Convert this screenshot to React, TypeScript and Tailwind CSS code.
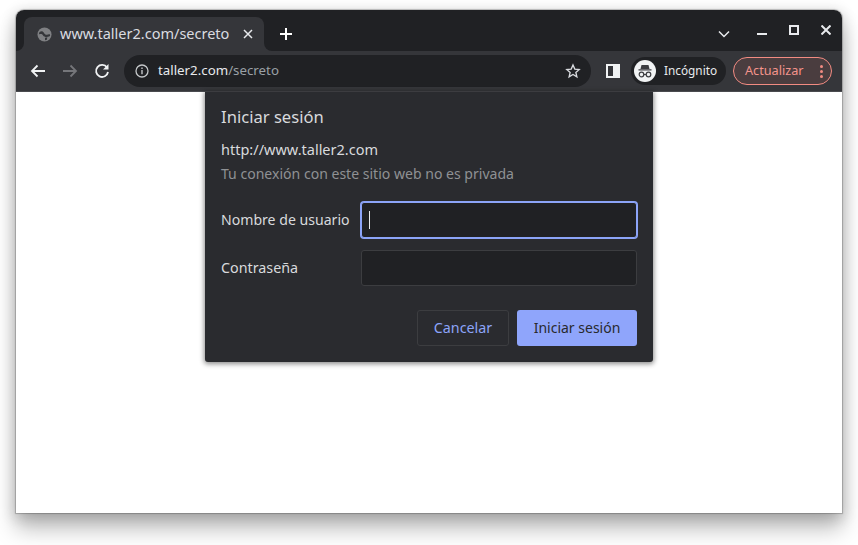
import React from "react";

const font = { fontFamily: '"Noto Sans", sans-serif' };

function Globe() {
  return (
    <svg width="15" height="15" viewBox="0 0 16 16" className="shrink-0">
      <circle cx="8" cy="8" r="7.500" fill="#7f8083" />
      <path d="M2.500 5.500C4.500 4 6.500 4.500 7.500 6.500 8.500 8.500 10.500 9 13.500 7.500L14 9.500C11 11 8 11 6.500 9 5.500 7.500 4 7 2 8z" fill="#35363a" />
      <path d="M8.500 11.500l2.500-.5-.5 2.500-2 .5z" fill="#35363a" />
    </svg>
  );
}

export default function App() {
  return (
    <div className="w-[858px] h-[545px] bg-white overflow-hidden pt-[10px] pl-4" style={font}>
      <div className="w-[826px] h-[503px] rounded-t-lg bg-white flex flex-col shadow-[0_0_1px_1px_rgba(0,0,0,0.22),0_3px_14px_2px_rgba(0,0,0,0.16),0_16px_22px_0_rgba(0,0,0,0.26)]">
        {/* Tab strip */}
        <div className="h-[41px] shrink-0 bg-[#202124] rounded-t-lg flex items-end pl-2">
          <div className="w-[240px] h-[34px] bg-[#35363a] rounded-t-lg flex items-center pl-[13px] pr-[11px] relative">
            <div className="absolute -left-2 bottom-0 w-2 h-2 bg-[#35363a]">
              <div className="w-full h-full bg-[#202124] rounded-br-lg" />
            </div>
            <div className="absolute -right-2 bottom-0 w-2 h-2 bg-[#35363a]">
              <div className="w-full h-full bg-[#202124] rounded-bl-lg" />
            </div>
            <Globe />
            <span className="ml-[8px] text-[14.500px] text-[#dadce0] whitespace-nowrap flex-1">www.taller2.com/secreto</span>
            <svg width="10" height="10" viewBox="0 0 10 10" className="shrink-0">
              <path d="M1 1l8 8M9 1l-8 8" stroke="#e8eaed" strokeWidth="1.500" />
            </svg>
          </div>
          <svg width="12" height="12" viewBox="0 0 12 12" className="ml-[16px] mb-[11px] shrink-0">
            <path d="M6 0v12M0 6h12" stroke="#fff" strokeWidth="2" />
          </svg>
          <div className="ml-auto flex items-start h-full pr-[11px]">
            <svg width="12" height="8" viewBox="0 0 12 8" className="mr-[27px] mt-[20px]">
              <path d="M1 1.500l5 5 5-5" fill="none" stroke="#e8eaed" strokeWidth="1.500" />
            </svg>
            <div className="w-[10px] h-[2px] bg-[#e8eaed] mr-[22px] mt-[23px]" />
            <div className="w-[10px] h-[10px] border-2 border-[#e8eaed] mr-[22px] mt-[15px]" />
            <svg width="10" height="10" viewBox="0 0 10 10" className="mt-[15px]">
              <path d="M.5.500l9 9M9.500.500l-9 9" stroke="#e8eaed" strokeWidth="2" />
            </svg>
          </div>
        </div>

        {/* Toolbar */}
        <div className="h-[41px] shrink-0 bg-[#35363a] border-b border-[#4a4b4f] flex items-center pl-[14px]">
          <svg width="16" height="14" viewBox="0 0 16 14" className="shrink-0">
            <path d="M15 7H2M7.500 1.500L2 7l5.500 5.500" fill="none" stroke="#f1f3f4" strokeWidth="1.800" />
          </svg>
          <svg width="16" height="14" viewBox="0 0 16 14" className="ml-[16px] shrink-0">
            <path d="M1 7h13M8.500 1.500L14 7l-5.500 5.500" fill="none" stroke="#75767a" strokeWidth="1.800" />
          </svg>
          <svg width="16" height="16" viewBox="0 0 16 16" className="ml-[16px] shrink-0">
            <path d="M13 4.500A6 6 0 1 0 14 9" fill="none" stroke="#f1f3f4" strokeWidth="1.800" />
            <path d="M14.500 1v5.500H9z" fill="#f1f3f4" />
          </svg>
          <div className="ml-[14px] w-[467px] h-8 shrink-0 rounded-full bg-[#202124] flex items-center pl-[11px] pr-[10px]">
            <svg width="14" height="14" viewBox="0 0 14 14" className="shrink-0">
              <circle cx="7" cy="7" r="6" fill="none" stroke="#c4c7c9" strokeWidth="1.300" />
              <path d="M7 6v4.200M7 3.500v1.500" stroke="#c4c7c9" strokeWidth="1.400" />
            </svg>
            <span className="ml-[9px] text-[13.300px] text-[#e8eaed] whitespace-nowrap">
              taller2.com<span className="text-[#9aa0a6]">/secreto</span>
            </span>
            <svg width="16" height="16" viewBox="0 0 24 24" className="ml-auto shrink-0">
              <path d="M12 3l2.700 6.100 6.600.7-5 4.400 1.500 6.500L12 17.300l-5.800 3.400 1.500-6.500-5-4.400 6.600-.7z" fill="none" stroke="#dadce0" strokeWidth="2" />
            </svg>
          </div>
          <div className="ml-[15px] w-[14px] h-[14px] shrink-0 border-2 border-[#f1f3f4] bg-[#35363a] flex justify-end">
            <div className="w-[5px] h-full bg-[#f1f3f4]" />
          </div>
          <div className="ml-[11px] h-[28px] w-[95px] shrink-0 rounded-full bg-[#202124] flex items-center pl-[3px]">
            <div className="w-[22px] h-[22px] rounded-full bg-[#f1f3f4] flex items-center justify-center shrink-0">
              <svg width="18" height="18" viewBox="0 0 18 18">
                <path d="M5.500 3h7l1 4h-9zM2.500 7.300h13v1.200h-13z" fill="#3c3d41" />
                <circle cx="5.500" cy="12.500" r="2.300" fill="none" stroke="#3c3d41" strokeWidth="1.200" />
                <circle cx="12.500" cy="12.500" r="2.300" fill="none" stroke="#3c3d41" strokeWidth="1.200" />
                <path d="M7.800 12.500h2.400" stroke="#3c3d41" strokeWidth="1.200" />
              </svg>
            </div>
            <span className="ml-[8px] text-[11.800px] text-[#e8eaed] whitespace-nowrap">Incógnito</span>
          </div>
          <div className="ml-[7px] h-[28px] w-[99px] shrink-0 rounded-full border border-[#f28b82] bg-[#4a3d3f] flex items-center pl-[11px] pr-[8px]">
            <span className="text-[12.700px] text-[#f4948c] whitespace-nowrap">Actualizar</span>
            <span className="ml-auto flex flex-col gap-[2px]">
              <span className="w-[3px] h-[3px] rounded-full bg-[#f28b82]" />
              <span className="w-[3px] h-[3px] rounded-full bg-[#f28b82]" />
              <span className="w-[3px] h-[3px] rounded-full bg-[#f28b82]" />
            </span>
          </div>
        </div>

        {/* Page */}
        <div className="flex-1 bg-white relative">
          <div className="absolute left-[189px] top-0 w-[448px] h-[270px] bg-[#2a2b2f] rounded-b-[3px] shadow-[0_1px_5px_1px_rgba(0,0,0,0.45)] pt-[14px] px-4">
            <h1 className="text-[16.600px] leading-[22px] font-normal text-[#d8dadd]">Iniciar sesión</h1>
            <p className="mt-[10px] text-[14.500px] leading-[22px] text-[#d8dadd]">http://www.taller2.com</p>
            <p className="mt-[3px] text-[14.050px] leading-[22px] text-[#8f9194]">Tu conexión con este sitio web no es privada</p>
            <div className="mt-[17px] flex items-center h-[36px]">
              <span className="w-[140px] pb-[1px] text-[14.100px] text-[#d8dadd] whitespace-nowrap">Nombre de usuario</span>
              <div className="w-[276px] h-[36px] bg-[#202124] border border-[#8ca4f8] ring-1 ring-[#8ca4f8] rounded-[3px] flex items-center pl-[7px]">
                <div className="w-px h-[18px] bg-[#e8eaed]" />
              </div>
            </div>
            <div className="mt-[12px] flex items-center h-[36px]">
              <span className="w-[140px] pb-[1px] text-[14.300px] text-[#d8dadd]">Contraseña</span>
              <div className="w-[276px] h-[36px] bg-[#202124] border border-[#3c3d40] rounded-[3px]" />
            </div>
            <div className="mt-[24px] flex justify-end gap-2">
              <div className="w-[92px] h-[36px] pb-[1px] border border-[#3c3d40] rounded-[3px] flex items-center justify-center text-[14.300px] text-[#8ca4f8]">Cancelar</div>
              <div className="w-[120px] h-[36px] pb-[1px] bg-[#8fa5fb] rounded-[3px] flex items-center justify-center text-[14px] text-[#292a2d]">Iniciar sesión</div>
            </div>
          </div>
        </div>
      </div>
    </div>
  );
}
